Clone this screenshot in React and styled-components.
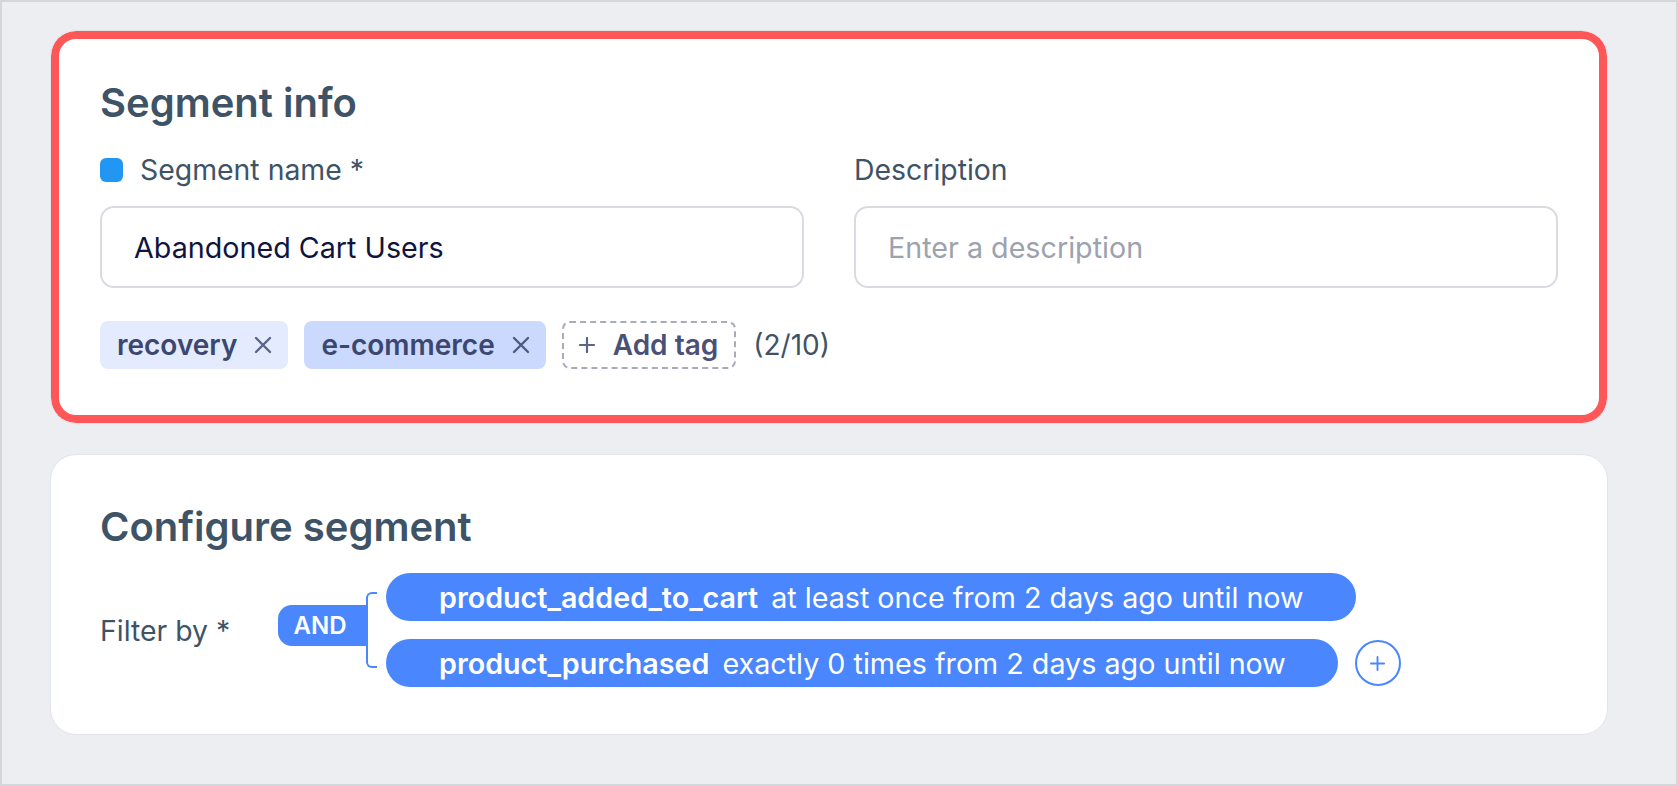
import React from 'react';
import styled, { createGlobalStyle } from 'styled-components';

const GlobalStyle = createGlobalStyle`
  body {
    margin: 0;
    font-family: Inter, "Noto Sans", sans-serif;
  }
`;

const Frame = styled.div`
  box-sizing: border-box;
  width: 1678px;
  height: 786px;
  border: 2px solid #d4d6db;
  background: #eceef2;
  padding: 28px 68px 0 48px;
  display: flex;
  flex-direction: column;
  gap: 30px;
`;

const Card = styled.section`
  box-sizing: border-box;
  background: #fff;
  border: 1px solid #e1e4e9;
  border-radius: 26px;
  padding: ${p => p.$top}px 49px ${p => p.$bottom}px;
  box-shadow: ${p => (p.$highlight ? 'inset 0 0 0 8px #ff5757' : 'none')};
`;

const Title = styled.h2`
  margin: 0;
  font-size: 40px;
  line-height: 48px;
  font-weight: 600;
  color: #3f5366;
`;

const Fields = styled.div`
  display: grid;
  grid-template-columns: 1fr 1fr;
  gap: 50px;
  margin-top: 26px;
`;

const Field = styled.div`
  display: flex;
  flex-direction: column;
  gap: 20px;
`;

const LabelRow = styled.div`
  display: flex;
  align-items: center;
  gap: 17px;
`;

const ColorDot = styled.span`
  width: 23px;
  height: 24px;
  border-radius: 6px;
  background: #2196f3;
`;

const Label = styled.label`
  font-size: 28.4px;
  line-height: 33px;
  color: #3f5366;
`;

const TextInput = styled.input`
  box-sizing: border-box;
  width: 100%;
  height: 82px;
  border: 2px solid #dadbe1;
  border-radius: 14px;
  padding: 0 32px;
  font-family: Inter, sans-serif;
  font-size: 28.7px;
  color: #10143f;
  outline: none;

  &::placeholder {
    color: #9ca2ae;
  }
`;

const Tags = styled.div`
  display: flex;
  align-items: center;
  gap: 16px;
  margin-top: 33px;
`;

const Tag = styled.span`
  box-sizing: border-box;
  height: 48px;
  display: flex;
  align-items: center;
  gap: 17px;
  padding: 0 16px 0 17px;
  border-radius: 8px;
  background: ${p => (p.$strong ? '#cad9fd' : '#e4ebfe')};
  font-size: 28px;
  font-weight: 600;
  color: #3b476f;
`;

const AddTag = styled.button`
  box-sizing: border-box;
  height: 48px;
  display: flex;
  align-items: center;
  gap: 18px;
  padding: 0 16px 0 15px;
  border: 2px dashed #a9abbd;
  border-radius: 8px;
  background: #fff;
  font-family: Inter, sans-serif;
  font-size: 28px;
  font-weight: 600;
  color: #4a5178;
`;

const Count = styled.span`
  margin-left: 1px;
  font-size: 28px;
  color: #3f5366;
`;

const FilterRow = styled.div`
  display: flex;
  align-items: center;
  margin-top: 22px;
`;

const FilterLabel = styled.span`
  width: 178px;
  font-size: 28.4px;
  line-height: 33px;
  color: #3f5366;
`;

const AndPill = styled.span`
  box-sizing: border-box;
  height: 41px;
  width: 88px;
  margin-bottom: 10px;
  display: flex;
  align-items: center;
  justify-content: center;
  padding-right: 4px;
  border-radius: 14px 0 0 14px;
  background: #4a86fd;
  color: #fff;
  font-size: 24px;
  font-weight: 600;
`;

const Bracket = styled.span`
  box-sizing: border-box;
  width: 11px;
  height: 76px;
  border: 2px solid #4a86fd;
  border-right: none;
  border-radius: 6px 0 0 6px;
`;

const Conditions = styled.div`
  display: flex;
  flex-direction: column;
  gap: 18px;
  margin-left: 9px;
`;

const ConditionRow = styled.div`
  display: flex;
  align-items: center;
  gap: 17px;
`;

const Condition = styled.div`
  height: 48px;
  display: flex;
  align-items: center;
  gap: 13px;
  padding: 0 52px 0 53px;
  border-radius: 24px;
  background: #4a86fd;
  color: #fff;
  font-size: 28.7px;
`;

const EventName = styled.span`
  font-weight: 600;
`;

const AddCircle = styled.button`
  box-sizing: border-box;
  width: 46px;
  height: 46px;
  padding: 0;
  border: 2px solid #4a86fd;
  border-radius: 50%;
  background: #fff;
  display: flex;
  align-items: center;
  justify-content: center;
`;

const CloseIcon = ({ color }) => (
  <svg width="18" height="18" viewBox="0 0 18 18">
    <path d="M2 2L16 16M16 2L2 16" stroke={color} strokeWidth="2.4" strokeLinecap="round" />
  </svg>
);

const PlusIcon = ({ size, color, weight }) => (
  <svg width={size} height={size} viewBox="0 0 16 16">
    <path d="M8 1V15M1 8H15" stroke={color} strokeWidth={weight} strokeLinecap="round" />
  </svg>
);

const conditions = [
  { event: 'product_added_to_cart', rule: 'at least once from 2 days ago until now' },
  { event: 'product_purchased', rule: 'exactly 0 times from 2 days ago until now' },
];

export default function App () {
  return (
    <Frame>
      <GlobalStyle />
      <Card $highlight $top={48} $bottom={54}>
        <Title>Segment info</Title>
        <Fields>
          <Field>
            <LabelRow>
              <ColorDot />
              <Label>Segment name *</Label>
            </LabelRow>
            <TextInput defaultValue="Abandoned Cart Users" />
          </Field>
          <Field>
            <LabelRow>
              <Label>Description</Label>
            </LabelRow>
            <TextInput placeholder="Enter a description" />
          </Field>
        </Fields>
        <Tags>
          <Tag>recovery <CloseIcon color="#5a6488" /></Tag>
          <Tag $strong>e-commerce <CloseIcon color="#4f5a80" /></Tag>
          <AddTag><PlusIcon size={16} color="#5b6586" weight={2.2} /> Add tag</AddTag>
          <Count>(2/10)</Count>
        </Tags>
      </Card>
      <Card $top={48} $bottom={47}>
        <Title>Configure segment</Title>
        <FilterRow>
          <FilterLabel>Filter by *</FilterLabel>
          <AndPill>AND</AndPill>
          <Bracket />
          <Conditions>
            {conditions.map((c, i) => (
              <ConditionRow key={c.event}>
                <Condition>
                  <EventName>{c.event}</EventName>
                  <span>{c.rule}</span>
                </Condition>
                {i === conditions.length - 1 && (
                  <AddCircle><PlusIcon size={15} color="#4a86fd" weight={2} /></AddCircle>
                )}
              </ConditionRow>
            ))}
          </Conditions>
        </FilterRow>
      </Card>
    </Frame>
  );
}
